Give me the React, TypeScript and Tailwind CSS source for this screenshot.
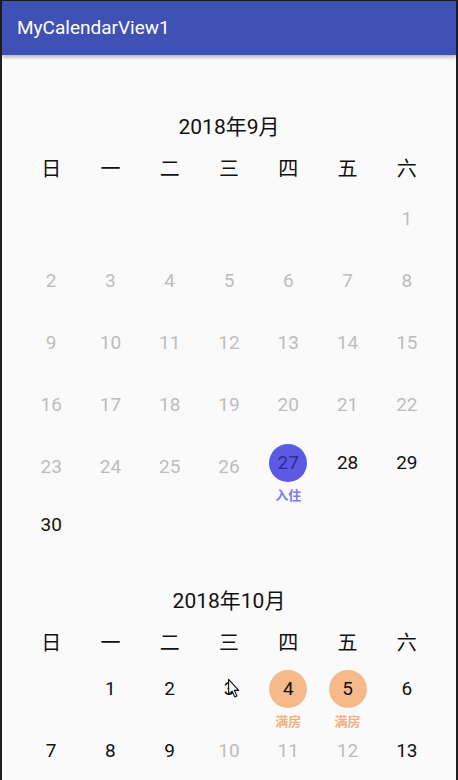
import React from 'react';

type Cell = {
  day?: number;
  kind?: 'past' | 'open' | 'closed';
  mark?: 'in' | 'full';
};

const WEEK = ['日', '一', '二', '三', '四', '五', '六'];

// September 2018 starts on Saturday, October on Monday
const sep: Cell[] = [
  ...Array(6).fill({}),
  ...Array.from({ length: 30 }, (_, i) => {
    const d = i + 1;
    if (d < 27) return { day: d, kind: 'past' as const };
    if (d === 27) return { day: d, kind: 'open' as const, mark: 'in' as const };
    return { day: d, kind: 'open' as const };
  }),
];

const oct: Cell[] = [
  {},
  ...Array.from({ length: 13 }, (_, i) => {
    const d = i + 1;
    if (d === 4 || d === 5) return { day: d, kind: 'open' as const, mark: 'full' as const };
    if (d >= 10 && d <= 12) return { day: d, kind: 'closed' as const };
    return { day: d, kind: 'open' as const };
  }),
];

const DayCell: React.FC<{ cell: Cell }> = ({ cell }) => {
  if (!cell.day) return <div className="h-[62px]" />;

  // past days sit centred, the rest leave room for a label underneath
  if (cell.kind === 'past') {
    return (
      <div className="h-[62px] flex items-center justify-center text-[19px] text-[#bdbdbd]">
        {cell.day}
      </div>
    );
  }

  let circle = '';
  let numColor = cell.kind === 'closed' ? 'text-[#bdbdbd]' : 'text-[#111111]';
  let label = '';
  let labelColor = '';
  if (cell.mark === 'in') {
    circle = 'bg-[#5d59e2]';
    numColor = 'text-[#2f2a9c]';
    label = '入住';
    labelColor = 'text-[#7f7bee]';
  } else if (cell.mark === 'full') {
    circle = 'bg-[#f6b98a]';
    label = '满房';
    labelColor = 'text-[#f5b07c]';
  }

  return (
    <div className="h-[62px] flex flex-col items-center pt-[8px]">
      <div className={`w-[38px] h-[38px] shrink-0 rounded-full flex items-center justify-center text-[19px] ${circle} ${numColor}`}>
        {cell.day}
      </div>
      {label && (
        <div className={`mt-[6px] h-[15px] leading-[15px] text-[13px] font-bold whitespace-nowrap ${labelColor}`}>
          {label}
        </div>
      )}
    </div>
  );
};

const Month: React.FC<{ title: string; cells: Cell[]; className?: string }> = ({ title, cells, className }) => (
  <div className={className}>
    <div className="h-[44px] flex items-center justify-center text-[21px] text-[#111111]">{title}</div>
    <div className="w-[415px] mx-auto grid grid-cols-7 h-[38px] items-center text-[20px] text-[#111111]">
      {WEEK.map((w) => (
        <div key={w} className="text-center">{w}</div>
      ))}
    </div>
    <div className="w-[415px] mx-auto grid grid-cols-7">
      {cells.map((c, i) => (
        <DayCell key={i} cell={c} />
      ))}
    </div>
  </div>
);

export default function App() {
  return (
    <div
      className="w-[458px] h-[780px] overflow-hidden bg-[#1f1f1f] pt-px px-[2px] flex flex-col"
      style={{ fontFamily: 'Roboto, "Noto Sans CJK SC", sans-serif' }}
    >
      {/* app bar */}
      <div className="relative z-10 h-[54px] shrink-0 bg-[#3f51b5] flex items-center pl-[15px] shadow-[0_2px_4px_rgba(0,0,0,0.3)]">
        <span className="text-white text-[19px]">MyCalendarView1</span>
      </div>

      {/* calendar list */}
      <div className="relative flex-1 bg-[#fafafa] pt-[51px] overflow-hidden">
        <Month title="2018年9月" cells={sep} />
        <Month title="2018年10月" cells={oct} className="mt-[20px]" />

        {/* mouse pointer left over the screen */}
        <svg
          className="absolute left-[224px] top-[623px]"
          width="14"
          height="22"
          viewBox="0 0 16 24"
        >
          <path
            d="M3 1 L3 18 L7 14.5 L10 21 L12.5 20 L9.5 13.5 L14.5 13.5 Z"
            fill="#ffffff"
            stroke="#111111"
            strokeWidth="1.3"
            strokeLinejoin="round"
          />
        </svg>
      </div>
    </div>
  );
}
